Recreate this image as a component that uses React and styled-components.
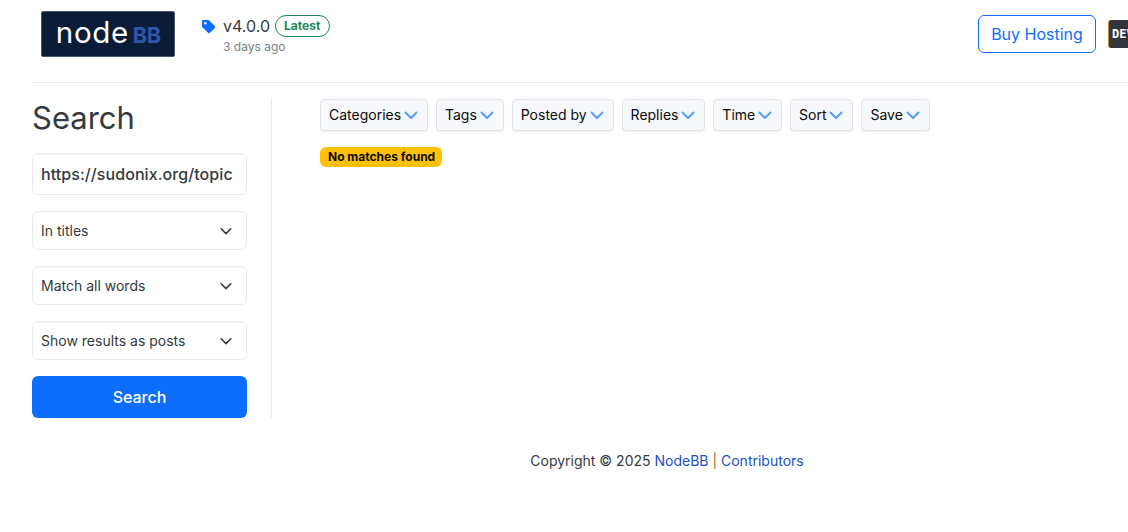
import React from "react";
import styled, { createGlobalStyle } from "styled-components";

const GlobalStyle = createGlobalStyle`
	html, body {
		margin: 0;
		padding: 0;
		background: #fff;
		overflow: hidden;
	}
	body {
		font-family: Inter, "Liberation Sans", sans-serif;
		color: #343a40;
	}
`;

const Chevron = ({ size = 14, width = 2 }) => (
	<svg width={size} height={size} viewBox="0 0 16 16" fill="none">
		<path
			d="M2.5 5.5 L8 11 L13.5 5.5"
			stroke="currentColor"
			strokeWidth={width}
			strokeLinecap="round"
			strokeLinejoin="round"
		/>
	</svg>
);

const Logo = () => (
	<LogoBox>
		<svg width="134" height="46" viewBox="0 0 134 46">
			<text
				x="14"
				y="32"
				fill="#fff"
				fontFamily="Inter, sans-serif"
				fontWeight="400"
				fontSize="30"
				letterSpacing="0.7"
			>
				node
			</text>
			<text
				x="92"
				y="32"
				fill="#2c57ad"
				fontFamily="Inter, sans-serif"
				fontWeight="700"
				fontSize="22"
				letterSpacing="-0.2"
			>
				BB
			</text>
		</svg>
	</LogoBox>
);

const filters = ["Categories", "Tags", "Posted by", "Replies", "Time", "Sort", "Save"];
const selects = ["In titles", "Match all words", "Show results as posts"];

const App = () => (
	<Page>
		<GlobalStyle />
		<Header>
			<Logo />
			<Version>
				<TagIcon viewBox="0 0 16 16">
					<path d="M1 1.8C1 1.3 1.4 1 1.8 1H7.6c.4 0 .8.2 1.1.5l6 6c.6.6.6 1.5 0 2.1l-5.1 5.1c-.6.6-1.5.6-2.1 0l-6-6C1.2 8.4 1 8 1 7.6V1.8Z" />
					<circle cx="4.6" cy="4.6" r="1.3" fill="#fff" />
				</TagIcon>
				<VersionText>
					<VersionLine>
						<VersionNumber>v4.0.0</VersionNumber>
						<LatestPill>Latest</LatestPill>
					</VersionLine>
					<Ago>3 days ago</Ago>
				</VersionText>
			</Version>
			<HeaderRight>
				<HostingButton>Buy Hosting</HostingButton>
				<DevBadge>DEV</DevBadge>
			</HeaderRight>
		</Header>
		<Main>
			<Sidebar>
				<Title>Search</Title>
				<QueryInput>https://sudonix.org/topic</QueryInput>
				{selects.map((label) => (
					<SelectBox key={label}>
						<span>{label}</span>
						<Chevron size={14} width={1.8} />
					</SelectBox>
				))}
				<SearchButton>Search</SearchButton>
			</Sidebar>
			<Results>
				<FilterRow>
					{filters.map((label) => (
						<FilterButton key={label}>
							{label}
							<FilterArrow>
								<Chevron size={16} width={1.8} />
							</FilterArrow>
						</FilterButton>
					))}
				</FilterRow>
				<NoMatches>No matches found</NoMatches>
			</Results>
		</Main>
		<Footer>
			Copyright © 2025 <FooterLink>NodeBB</FooterLink> <Pipe>|</Pipe>{" "}
			<FooterLink>Contributors</FooterLink>
		</Footer>
	</Page>
);

const Page = styled.div`
	width: 1128px;
	height: 532px;
	padding-left: 32px;
	box-sizing: border-box;
	overflow: hidden;
`;
const Header = styled.header`
	display: flex;
	align-items: flex-start;
	height: 83px;
	padding: 11px 0 0 9px;
	box-sizing: border-box;
	border-bottom: 1px solid #e6e8ea;
	margin-bottom: 15px;
`;
const LogoBox = styled.div`
	width: 134px;
	height: 46px;
	background: #0b1c38;
	border: 1px solid #4a5870;
	box-sizing: border-box;
	border-radius: 2px;
	overflow: hidden;
	display: flex;
	align-items: center;
	justify-content: center;
	flex-shrink: 0;
`;
const Version = styled.div`
	display: flex;
	align-items: flex-start;
	margin-left: 26px;
	padding-top: 4px;
`;
const TagIcon = styled.svg`
	width: 15px;
	height: 15px;
	fill: #0d6efd;
	margin-top: 4px;
	margin-right: 7px;
`;
const VersionText = styled.div`
	display: flex;
	flex-direction: column;
`;
const VersionLine = styled.div`
	display: flex;
	align-items: center;
	gap: 5px;
`;
const VersionNumber = styled.span`
	font-size: 16px;
	line-height: 22px;
	color: #343a40;
`;
const LatestPill = styled.span`
	font-size: 12px;
	font-weight: 700;
	line-height: 14px;
	color: #198754;
	border: 1px solid #198754;
	border-radius: 11px;
	padding: 3px 9px 3px 8px;
	background: #fff;
`;
const Ago = styled.span`
	font-size: 12px;
	line-height: 16px;
	margin-top: 2px;
	color: #7a8188;
`;
const HeaderRight = styled.div`
	display: flex;
	align-items: flex-start;
	margin-left: auto;
	width: 150px;
	padding-top: 4px;
	flex-shrink: 0;
`;
const HostingButton = styled.button`
	font-family: inherit;
	font-size: 16px;
	width: 118px;
	height: 38px;
	flex-shrink: 0;
	color: #0d6efd;
	background: #fff;
	border: 1px solid #0d6efd;
	border-radius: 6px;
	padding: 0;
`;
const DevBadge = styled.div`
	margin-left: 12px;
	margin-top: 5px;
	width: 32px;
	height: 28px;
	flex-shrink: 0;
	box-sizing: border-box;
	padding-left: 3px;
	background: #32363a;
	border-left: 1px solid #c98a3c;
	border-radius: 3px 0 0 3px;
	color: #fff;
	font-family: "DejaVu Sans Mono", monospace;
	font-weight: 700;
	font-size: 12px;
	line-height: 28px;
	white-space: nowrap;
`;
const Main = styled.main`
	display: flex;
	align-items: flex-start;
`;
const Sidebar = styled.aside`
	width: 215px;
	height: 320px;
	padding-right: 24px;
	border-right: 1px solid #e6e8ea;
	display: flex;
	flex-direction: column;
	flex-shrink: 0;
`;
const Title = styled.h1`
	margin: 0 0 15px;
	font-size: 31px;
	font-weight: 400;
	line-height: 40px;
	color: #343a40;
`;
const QueryInput = styled.div`
	box-sizing: border-box;
	height: 42px;
	padding: 0 8px;
	display: flex;
	align-items: center;
	font-size: 16px;
	font-weight: 450;
	letter-spacing: 0.07px;
	white-space: nowrap;
	overflow: hidden;
	border: 1px solid #e9ecef;
	border-radius: 6px;
	box-shadow: inset 0 1px 1px rgba(0, 0, 0, 0.03);
	color: #343a40;
	margin-bottom: 16px;
`;
const SelectBox = styled.div`
	box-sizing: border-box;
	height: 39px;
	padding: 0 13px 0 8px;
	display: flex;
	align-items: center;
	justify-content: space-between;
	font-size: 14px;
	border: 1px solid #e9ecef;
	border-radius: 6px;
	box-shadow: inset 0 1px 1px rgba(0, 0, 0, 0.03);
	color: #343a40;
	margin-bottom: 16px;
`;
const SearchButton = styled.button`
	font-family: inherit;
	height: 42px;
	font-size: 16px;
	font-weight: 500;
	color: #fff;
	background: #0d6efd;
	border: none;
	border-radius: 6px;
	padding: 0;
`;
const Results = styled.section`
	margin-left: 48px;
	padding-top: 1px;
`;
const FilterRow = styled.div`
	display: flex;
	gap: 8px;
	margin-bottom: 16px;
`;
const FilterButton = styled.button`
	font-family: inherit;
	font-size: 14px;
	line-height: 20px;
	height: 32px;
	box-sizing: border-box;
	display: flex;
	align-items: center;
	gap: 1.9px;
	padding: 0 8px;
	color: #0a0a0a;
	background: #f6f8fb;
	border: 1px solid #e0e3e7;
	border-radius: 4px;
	box-shadow: 0 1px 1px rgba(0, 0, 0, 0.06);
	white-space: nowrap;
`;
const FilterArrow = styled.span`
	display: flex;
	color: #4c9aff;
`;
const NoMatches = styled.div`
	display: block;
	width: fit-content;
	font-size: 12px;
	font-weight: 700;
	line-height: 14px;
	padding: 3px 7px 3px 8px;
	color: #0a0a0a;
	background: #ffc107;
	border-radius: 6px;
`;
const Footer = styled.footer`
	margin-top: 34px;
	width: 1270px;
	text-align: center;
	font-size: 14px;
	line-height: 18px;
	color: #343a40;
`;
const FooterLink = styled.a`
	color: #1b52c4;
`;
const Pipe = styled.span`
	color: #a8682a;
`;

export default App;
